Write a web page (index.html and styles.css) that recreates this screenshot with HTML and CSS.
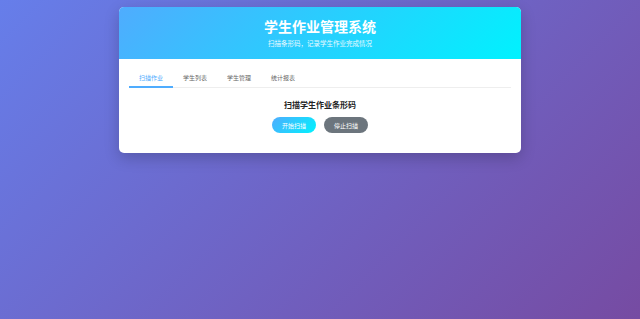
FILE: index.html
```html
<!DOCTYPE html>
<html lang="zh-CN">

<head>
    <meta charset="UTF-8">
    <title>学生作业管理系统</title>
    <link rel="stylesheet" href="styles.css">
</head>

<body>
    <div class="container">
        <div class="header">
            <h1>学生作业管理系统</h1>
            <p>扫描条形码，记录学生作业完成情况</p>
        </div>
        <div class="content">
            <ul class="tabs">
                <li class="on">扫描作业</li>
                <li>学生列表</li>
                <li>学生管理</li>
                <li>统计报表</li>
            </ul>
            <div class="panel">
                <h2>扫描学生作业条形码</h2>
                <div class="btns">
                    <button class="btn btn-primary">开始扫描</button>
                    <button class="btn btn-secondary">停止扫描</button>
                </div>
            </div>
        </div>
    </div>
</body>

</html>
```

FILE: styles.css
```css
* {
    margin: 0;
    padding: 0;
    list-style: none;
    box-sizing: border-box;
}

html,
body {
    height: 100%;
}

body {
    font-family: "Noto Sans CJK SC", "Noto Sans", sans-serif;
    background: linear-gradient(135deg, #667eea 0%, #764ba2 100%);
    padding-top: 7px;
}

.container {
    width: 402px;
    margin: 0 auto;
    background: #fff;
    border-radius: 5px;
    overflow: hidden;
    box-shadow: 0 5px 15px rgba(0, 0, 0, 0.2);
}

.header {
    background: linear-gradient(135deg, #4facfe 0%, #00f2fe 100%);
    color: #fff;
    text-align: center;
    padding: 11px 10px 11px;
}

.header h1 {
    font-size: 14px;
    line-height: 17px;
    font-weight: bold;
}

.header p {
    font-size: 6.5px;
    line-height: 10px;
    margin-top: 3px;
    opacity: 0.9;
}

.content {
    padding: 10px 10px 20px;
}

.tabs {
    display: flex;
    border-bottom: 1px solid #eee;
}

.tabs li {
    font-size: 6px;
    line-height: 8px;
    color: #666;
    padding: 5px 10px 4px;
    border-bottom: 2px solid transparent;
    margin-bottom: -1px;
    cursor: pointer;
}

.tabs .on {
    color: #4facfe;
    border-bottom-color: #4facfe;
}

.panel {
    text-align: center;
    padding-top: 12px;
}

.panel h2 {
    font-size: 8px;
    line-height: 10px;
    font-weight: bold;
    color: #222;
}

.btns {
    display: flex;
    justify-content: center;
    gap: 8px;
    margin-top: 7px;
}

.btn {
    width: 44px;
    height: 16px;
    border: none;
    border-radius: 8px;
    color: #fff;
    font-family: inherit;
    font-size: 6px;
    cursor: pointer;
}

.btn-primary {
    background: linear-gradient(135deg, #4facfe 0%, #00f2fe 100%);
}

.btn-secondary {
    background: #6c757d;
}
```
